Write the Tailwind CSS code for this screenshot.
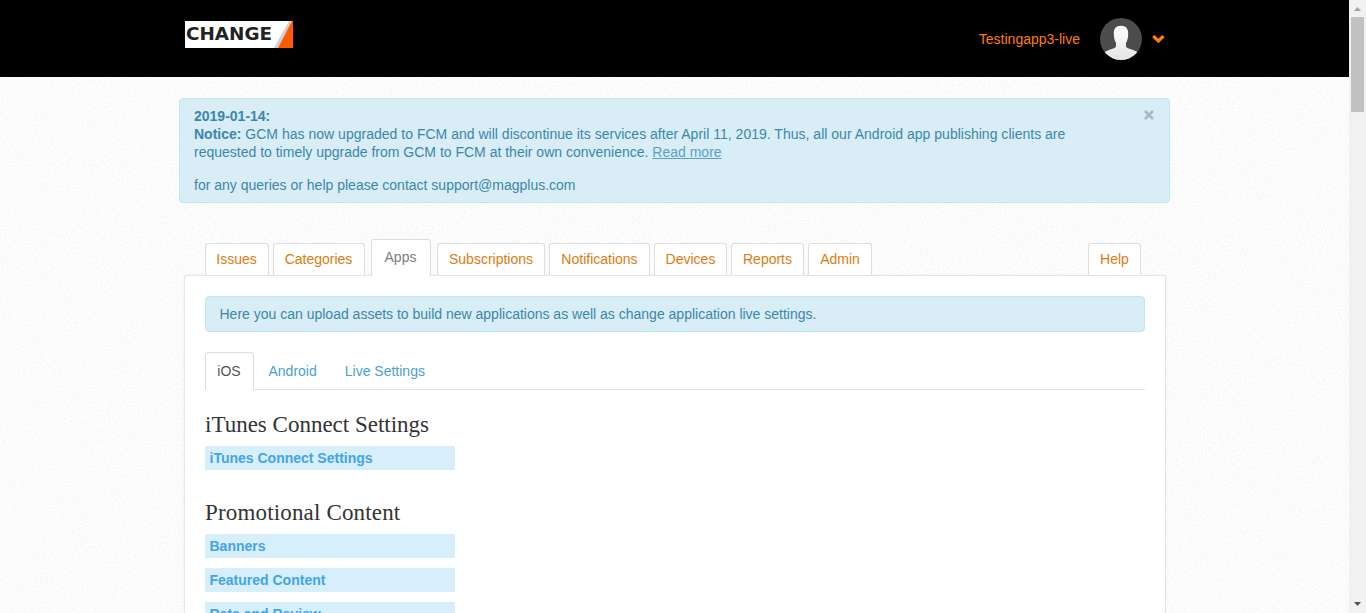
<!DOCTYPE html>
<html lang="en">
<head>
<meta charset="utf-8">
<title>Apps</title>
<script src="https://cdn.jsdelivr.net/npm/@tailwindcss/browser@4"></script>
</head>
<body class="flex h-[613px] w-[1366px] overflow-hidden bg-[#fbfbfb] font-['Liberation_Sans',Arial,sans-serif] text-[14px] leading-[18px] text-[#333]">
<div class="relative isolate h-[613px] w-[1349px] overflow-hidden">
  <!-- paper grain -->
  <svg class="absolute inset-0 -z-10 h-full w-full" aria-hidden="true">
    <filter id="grain" x="0" y="0" width="100%" height="100%" color-interpolation-filters="sRGB">
      <feTurbulence type="fractalNoise" baseFrequency="0.55" numOctaves="2" stitchTiles="stitch"/>
      <feColorMatrix type="matrix" values="0.065 0 0 0 0.952  0.065 0 0 0 0.952  0.065 0 0 0 0.952  0 0 0 0 1"/>
    </filter>
    <rect width="100%" height="100%" filter="url(#grain)"/>
  </svg>

  <header class="flex h-[77px] items-start justify-between bg-black pl-[185px] pr-[184px]">
    <svg class="mt-[21px] h-[27px] w-[108px]" viewBox="0 0 108 27">
      <rect width="108" height="27" fill="#fff"/>
      <path d="M104 0H108L93 27H89Z" fill="#d0d0d0"/>
      <path d="M107 0H108V27H93Z" fill="#ff5a00"/>
      <text x="1" y="19.300" textLength="86" lengthAdjust="spacingAndGlyphs" font-family="DejaVu Sans" font-weight="bold" font-size="17" fill="#222">CHANGE</text>
    </svg>
    <div class="mt-[18px] flex items-center">
      <span class="text-[#ff7b0a]">Testingapp3-live</span>
      <svg class="ml-5 h-[42px] w-[42px]" viewBox="0 0 42 42">
        <defs>
          <clipPath id="disc"><circle cx="21" cy="21" r="21"/></clipPath>
          <linearGradient id="shade" x1="0" y1="0" x2="0" y2="1"><stop offset="0" stop-color="#fff"/><stop offset="1" stop-color="#e4e4e4"/></linearGradient>
        </defs>
        <g clip-path="url(#disc)">
          <rect width="42" height="42" fill="#4c4c4c"/>
          <path d="M21 7.700C16 7.700 13.800 10.500 13.800 15.500C13.800 19.500 14.500 22.500 16 25V28.500C15.500 30 12 31 9 32C6.500 32.800 4.500 33.700 3 36V42H39V36C37.500 33.700 35.500 32.800 33 32C30 31 26.500 30 26 28.500V25C27.500 22.500 28.200 19.500 28.200 15.500C28.200 10.500 26 7.700 21 7.700Z" fill="url(#shade)"/>
        </g>
      </svg>
      <svg class="ml-[10px] h-[9px] w-[13px]" viewBox="0 0 13 9"><path d="M1.300 1L6.400 6L11.500 1" fill="none" stroke="#ff7b0a" stroke-width="3.200"/></svg>
    </div>
  </header>

  <section class="ml-[179px] mt-[21px] flex h-[105px] w-[991px] justify-between rounded border border-[#bce8f1] bg-[#d9edf7] py-2 pl-[14px] pr-[15px] text-[#3a87ad]">
    <div class="whitespace-nowrap">
      <p><b>2019-01-14:</b></p>
      <p><b>Notice:</b> <span class="tracking-[0.014px]">GCM has now upgraded to FCM and will discontinue its services after April 11, 2019. Thus, all our Android app publishing clients are</span><br>requested to timely upgrade from GCM to FCM at their own convenience. <a class="text-[#5a9fc4] underline">Read more</a></p>
      <p class="mt-[15px]">for any queries or help please contact support@magplus.com</p>
    </div>
    <svg class="mt-[3px] h-[10px] w-[10px]" viewBox="0 0 10 10"><path d="M1 1L9 9M9 1L1 9" stroke="#a9b9c1" stroke-width="2.600"/></svg>
  </section>

  <nav class="relative z-10 ml-[205px] mt-9 flex h-[37px] w-[936px] items-end text-center text-[#e07b10]">
    <a class="mb-px mr-1 h-8 w-16 rounded-t-[3px] border border-b-0 border-[#ddd] bg-white pr-px pt-[6px]">Issues</a>
    <a class="mb-px mr-[6px] h-8 w-[92px] rounded-t-[3px] border border-b-0 border-[#ddd] bg-white pr-px pt-[6px]">Categories</a>
    <a class="mr-[6px] h-[37px] w-[60px] rounded-t-[3px] border border-b-0 border-[#ddd] bg-white pr-px pt-2 text-[#808080]">Apps</a>
    <a class="mb-px mr-1 h-8 w-[108px] rounded-t-[3px] border border-b-0 border-[#ddd] bg-white pt-[6px]">Subscriptions</a>
    <a class="mb-px mr-1 h-8 w-[101px] rounded-t-[3px] border border-b-0 border-[#ddd] bg-white pt-[6px]">Notifications</a>
    <a class="mb-px mr-1 h-8 w-[73px] rounded-t-[3px] border border-b-0 border-[#ddd] bg-white pt-[6px]">Devices</a>
    <a class="mb-px mr-1 h-8 w-[73px] rounded-t-[3px] border border-b-0 border-[#ddd] bg-white pt-[6px]">Reports</a>
    <a class="mb-px h-8 w-16 rounded-t-[3px] border border-b-0 border-[#ddd] bg-white pt-[6px]">Admin</a>
    <a class="mb-px ml-auto h-8 w-[53px] rounded-t-[3px] border border-b-0 border-[#ddd] bg-white pt-[6px]">Help</a>
  </nav>

  <main class="-mt-px ml-[184px] h-[400px] w-[982px] rounded-[3px] border border-[#e5e5e5] bg-white px-5 pt-5 shadow-[0_0_3px_rgba(0,0,0,0.06)]">
    <div class="h-9 rounded border border-[#bce8f1] bg-[#d9edf7] px-[13.5px] pt-2 text-[#3a87ad]">Here you can upload assets to build new applications as well as change application live settings.</div>
    <div class="mt-5 flex h-[38px] border-b border-[#ddd] text-[#4a9fd0]">
      <a class="h-[38px] w-[49px] rounded-t border border-b-0 border-[#ddd] bg-white pr-px pt-[9px] text-center text-[#555]">iOS</a>
      <a class="ml-[14.5px] pt-[10px]">Android</a>
      <a class="ml-7 pt-[10px]">Live Settings</a>
    </div>
    <h2 class="mt-5 h-9 whitespace-nowrap font-['Liberation_Serif',Georgia,serif] text-[23px] leading-[30px]">iTunes Connect Settings</h2>
    <a class="block h-6 w-[250px] bg-[#d7eefb] pl-[4.5px] pt-[3px] font-bold text-[#42a5e8]">iTunes Connect Settings</a>
    <h2 class="mt-7 h-9 whitespace-nowrap font-['Liberation_Serif',Georgia,serif] text-[23px] leading-[30px] tracking-[0.16px]">Promotional Content</h2>
    <div class="flex w-[250px] flex-col gap-[10px] font-bold text-[#42a5e8]">
      <a class="h-6 bg-[#d7eefb] pl-[4.5px] pt-[3px]">Banners</a>
      <a class="h-6 bg-[#d7eefb] pl-[4.5px] pt-[3px]">Featured Content</a>
      <a class="h-6 bg-[#d7eefb] pl-[4.5px] pt-[3px]">Rate and Review</a>
    </div>
  </main>
</div>

<aside class="flex h-[613px] w-[17px] flex-col items-center bg-[#f1f1f1]">
  <svg class="h-[17px] w-[17px]" viewBox="0 0 17 17"><path d="M5 11L8.500 7L12 11Z" fill="#a3a3a3"/></svg>
  <div class="h-[95px] w-[13px] bg-[#c1c1c1]"></div>
  <svg class="mt-auto h-[17px] w-[17px]" viewBox="0 0 17 17"><path d="M5 6L8.500 10L12 6Z" fill="#505050"/></svg>
</aside>
</body>
</html>
